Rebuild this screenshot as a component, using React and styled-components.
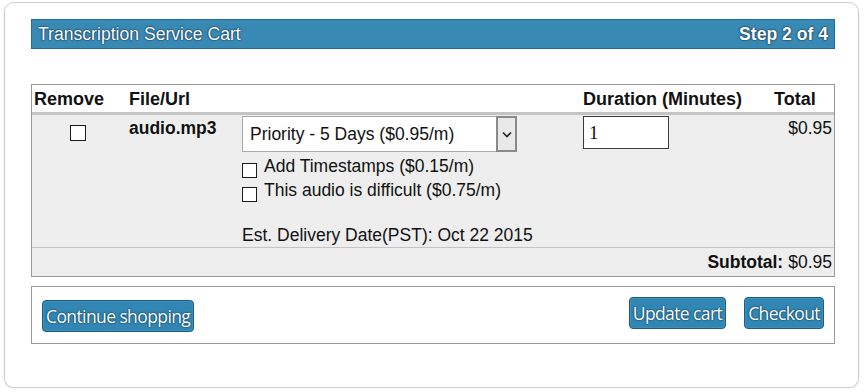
import React from "react";
import styled, { createGlobalStyle } from "styled-components";

const Global = createGlobalStyle`
  html, body { margin: 0; padding: 0; background: #fff; }
  body { font-family: "Liberation Sans", Arial, sans-serif; color: #111; }
`;

const Card = styled.div`
  box-sizing: border-box;
  margin: 2px 0 0 4px;
  width: 855px;
  height: 386px;
  border: 1.5px solid #cfcfcf;
  border-radius: 10px;
  box-shadow: 0 1px 2px rgba(0,0,0,0.15);
  padding: 16px 22px 0 26px;
`;

const TitleBar = styled.div`
  box-sizing: border-box;
  height: 30px;
  width: 804px;
  background: #3889b4;
  border: 1px solid #1f6d96;
  display: flex;
  align-items: center;
  justify-content: space-between;
  padding: 0 6px 0 6px;
  color: #fff;
  font-size: 17.6px;
  text-shadow: 0 0 2px rgba(0,30,55,0.9), 0 0 1px rgba(0,30,55,0.9);
`;

const Step = styled.span`
  font-weight: bold;
`;

const Table = styled.div`
  box-sizing: border-box;
  margin-top: 35px;
  width: 804px;
  border: 1px solid #9a9a9a;
  display: grid;
  grid-template-columns: 93px 113px 342px 177px 1fr;
  font-size: 17.5px;
`;

const HeadCell = styled.div`
  box-sizing: border-box;
  height: 30px;
  display: flex;
  align-items: center;
  padding: 1px 0 0 ${(p) => p.$pl || 0}px;
  font-weight: bold;
  font-size: 18px;
  background: #fff;
  border-bottom: 3px solid #c4c4c4;
`;

const Cell = styled.div`
  background: #eeeeee;
  padding: ${(p) => p.$pt || 3}px 2px 0 ${(p) => p.$pl || 0}px;
  height: 133px;
  box-sizing: border-box;
  display: flex;
  flex-direction: column;
  align-items: ${(p) => p.$align || "flex-start"};
  border-bottom: 1px solid #c4c4c4;
`;

const FileName = styled.div`
  font-weight: bold;
  text-shadow: 0 0 2px #fff;
`;

const SubtotalRow = styled.div`
  grid-column: 1 / -1;
  background: #eeeeee;
  height: 28px;
  display: flex;
  align-items: center;
  justify-content: flex-end;
  padding-right: 2px;
  gap: 5px;
`;

const Bold = styled.span`
  font-weight: bold;
`;

const Check = styled.input.attrs({ type: "checkbox" })`
  appearance: none;
  -webkit-appearance: none;
  box-sizing: border-box;
  width: ${(p) => p.$size || 15}px;
  height: ${(p) => p.$size || 15}px;
  border: 1.5px solid #1a1a1a;
  background: #fff;
  margin: 0;
  flex: none;
`;

const SelectBox = styled.div`
  box-sizing: border-box;
  display: flex;
  width: 275px;
  height: 36px;
  border: 1px solid #a9a9a9;
  background: #fff;
`;

const SelectInput = styled.select`
  appearance: none;
  -webkit-appearance: none;
  flex: 1;
  border: none;
  background: transparent;
  font-family: "Liberation Sans", Arial, sans-serif;
  font-size: 17.5px;
  color: #111;
  padding: 0 0 0 7px;
  outline: none;
`;

const ArrowBox = styled.div`
  box-sizing: border-box;
  width: 21px;
  margin: -1px -1px -1px 0;
  border: 2px solid #8a8a8a;
  background: #e9e9e9;
  display: flex;
  align-items: center;
  justify-content: center;
`;

const OptionLine = styled.label`
  display: flex;
  align-items: flex-start;
  gap: 7px;
  height: 24px;
  line-height: 20px;
  & > input { margin-top: 7px; }
`;

const Options = styled.div`
  margin-top: 4px;
  display: flex;
  flex-direction: column;
`;

const Delivery = styled.div`
  margin-top: 21px;
`;

const Qty = styled.input`
  box-sizing: border-box;
  width: 86px;
  height: 33px;
  border: 1.5px solid #3a3a3a;
  margin: 0;
  padding: 1px 5px 0;
  font-family: "Liberation Serif", "Times New Roman", serif;
  font-size: 19px;
  color: #111;
  background: #fff;
`;

const Actions = styled.div`
  box-sizing: border-box;
  margin-top: 9px;
  width: 804px;
  height: 58px;
  border: 1px solid #9a9a9a;
  display: flex;
  align-items: flex-start;
  padding: 10px 10px 0 10px;
  gap: 18px;
`;

const Button = styled.button`
  box-sizing: border-box;
  height: 32px;
  padding: 0 3px;
  margin-top: ${(p) => p.$mt || 0}px;
  margin-right: ${(p) => (p.$push ? "auto" : "0")};
  background: #3186b3;
  border: 1px solid #1b5e84;
  border-radius: 4px;
  box-shadow: inset 0 0 0 1px rgba(255,255,255,0.08);
  color: #fff;
  font-family: "Open Sans", "DejaVu Sans", sans-serif;
  font-size: 17.5px;
  font-weight: 500;
  letter-spacing: -0.6px;
  text-shadow: 0 0 2px #0b3b57, 0 0 1px #0b3b57;
  cursor: pointer;
`;

export default function App() {
  return (
    <>
      <Global />
      <Card>
        <TitleBar>
          <span>Transcription Service Cart</span>
          <Step>Step 2 of 4</Step>
        </TitleBar>
        <Table>
          <HeadCell $pl={2}>Remove</HeadCell>
          <HeadCell $pl={4}>File/Url</HeadCell>
          <HeadCell />
          <HeadCell $pl={3}>Duration (Minutes)</HeadCell>
          <HeadCell $pl={17}>Total</HeadCell>

          <Cell $align="center" $pt={10}>
            <Check $size={16} />
          </Cell>
          <Cell $pl={4} $pt={3}>
            <FileName>audio.mp3</FileName>
          </Cell>
          <Cell $pl={4} $pt={1}>
            <SelectBox>
              <SelectInput defaultValue="p5">
                <option value="p5">Priority - 5 Days ($0.95/m)</option>
              </SelectInput>
              <ArrowBox>
                <svg width="10" height="7" viewBox="0 0 10 7">
                  <path d="M1 1.5 L5 5.5 L9 1.5" fill="none" stroke="#222" strokeWidth="1.6" />
                </svg>
              </ArrowBox>
            </SelectBox>
            <Options>
              <OptionLine>
                <Check />
                <span>Add Timestamps ($0.15/m)</span>
              </OptionLine>
              <OptionLine>
                <Check />
                <span>This audio is difficult ($0.75/m)</span>
              </OptionLine>
            </Options>
            <Delivery>Est. Delivery Date(PST): Oct 22 2015</Delivery>
          </Cell>
          <Cell $pl={3} $pt={1}>
            <Qty defaultValue="1" />
          </Cell>
          <Cell $align="flex-end" $pt={3}>
            <span>$0.95</span>
          </Cell>

          <SubtotalRow>
            <Bold>Subtotal:</Bold>
            <span>$0.95</span>
          </SubtotalRow>
        </Table>
        <Actions>
          <Button $push $mt={3}>Continue shopping</Button>
          <Button>Update cart</Button>
          <Button>Checkout</Button>
        </Actions>
      </Card>
    </>
  );
}
